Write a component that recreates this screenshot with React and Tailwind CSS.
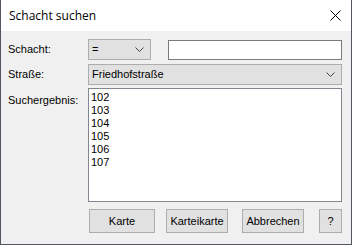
import { useState } from "react";

const FONT = { fontFamily: '"Liberation Sans", Arial, sans-serif' };

const Chevron = () => (
  <svg width="9" height="5" viewBox="0 0 9 5" className="shrink-0">
    <path d="M0.5 0.5 L4.5 4.5 L8.5 0.5" fill="none" stroke="#404040" strokeWidth="1" />
  </svg>
);

const Combo = ({ value, className }) => (
  <div
    className={`flex h-[21px] items-center justify-between border border-[#adadad] bg-[#e1e1e1] pl-[3px] pr-[6px] text-[11px] text-black ${className}`}
  >
    <span>{value}</span>
    <Chevron />
  </div>
);

const Btn = ({ children, className }) => (
  <button
    className={`flex h-[24px] items-center justify-center border border-[#adadad] bg-[#e1e1e1] text-[11px] text-black ${className}`}
  >
    {children}
  </button>
);

export default function App() {
  const [text, setText] = useState("");
  const results = ["102", "103", "104", "105", "106", "107"];

  return (
    <div
      className="flex h-[245px] w-[352px] flex-col border border-t-0 border-[#505760] bg-[#f0f0f0]"
      style={FONT}
    >
      {/* Title bar */}
      <div className="flex h-[31px] items-center justify-between bg-white pl-[8px] pr-[10px]">
        <span className="text-[12px] text-black" style={{ fontFamily: '"Open Sans", "Noto Sans", sans-serif' }}>
          Schacht suchen
        </span>
        <svg width="11" height="11" viewBox="0 0 11 11">
          <path d="M0.5 0.5 L10.5 10.5 M10.5 0.5 L0.5 10.5" stroke="#000" strokeWidth="1" />
        </svg>
      </div>

      {/* Body */}
      <div className="flex flex-col pl-[7px] pt-[8px] text-[11px] text-black">
        <div className="flex items-center">
          <span className="w-[80px]">Schacht:</span>
          <Combo value="=" className="w-[63px]" />
          <input
            value={text}
            onChange={(e) => setText(e.target.value)}
            className="ml-[17px] h-[20px] w-[174px] border border-[#7a7a7a] bg-white outline-none"
          />
        </div>

        <div className="mt-[4px] flex items-center">
          <span className="w-[80px]">Straße:</span>
          <Combo value="Friedhofstraße" className="w-[254px]" />
        </div>

        <div className="mt-[3px] flex">
          <span className="w-[80px] pt-[4px]">Suchergebnis:</span>
          <div className="h-[114px] w-[254px] border border-[#828790] bg-white pl-[2px] pt-[2px]">
            {results.map((r) => (
              <div key={r} className="h-[13px] leading-[13px]">
                {r}
              </div>
            ))}
          </div>
        </div>

        <div className="mt-[7px] flex pl-[81px]">
          <Btn className="w-[66px]">Karte</Btn>
          <Btn className="ml-[11px] w-[62px]">Karteikarte</Btn>
          <Btn className="ml-[14px] w-[62px]">Abbrechen</Btn>
          <Btn className="ml-[15px] w-[23px]">?</Btn>
        </div>
      </div>
    </div>
  );
}
